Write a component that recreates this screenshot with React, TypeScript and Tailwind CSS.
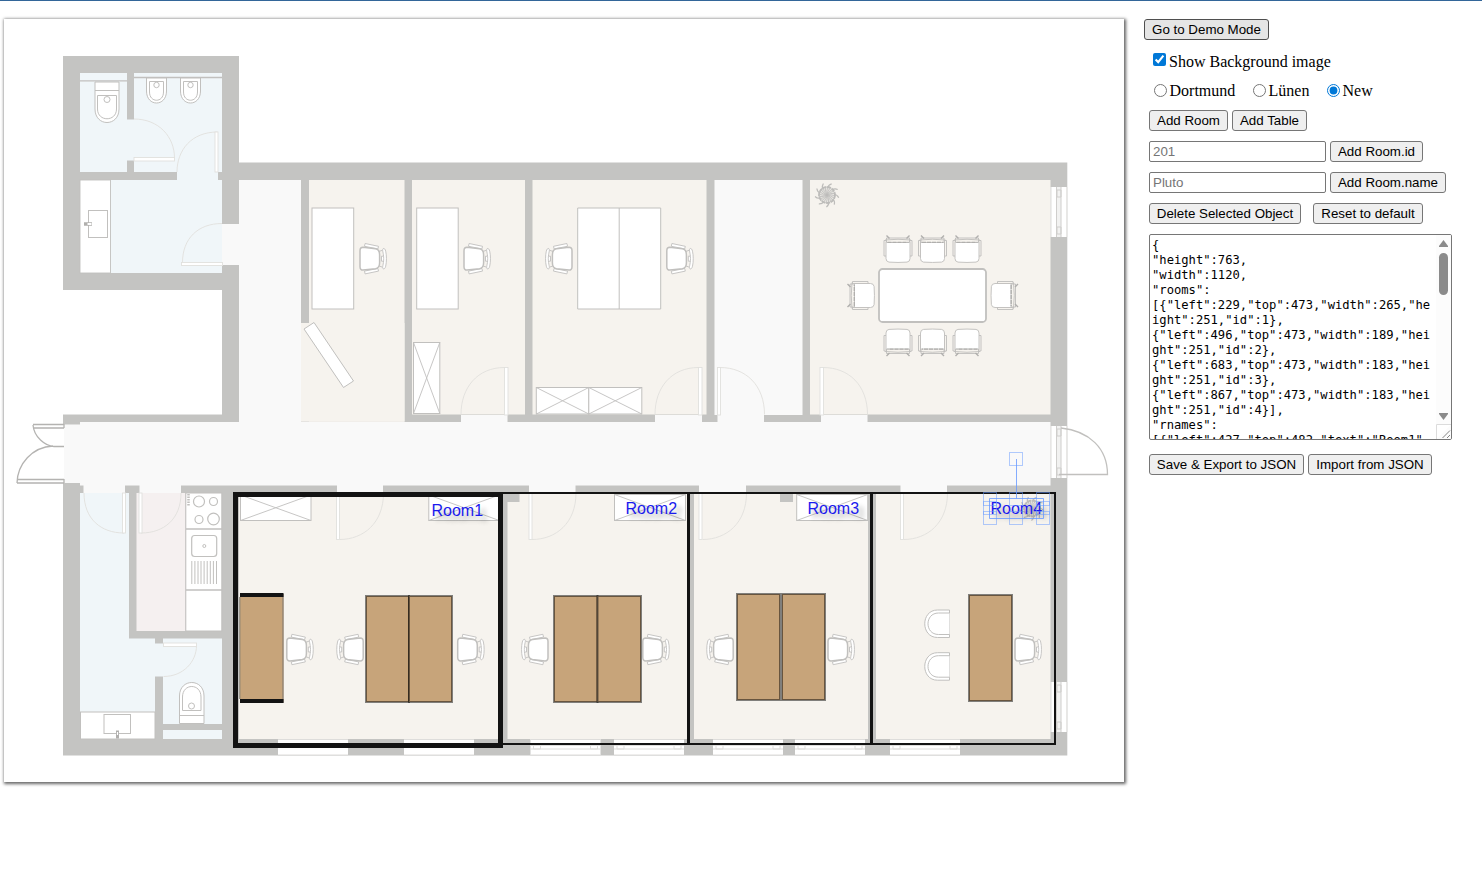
import React from "react";

type Box = [number, number, number, number];

const WALL = "#c4c4c2";
const LINE = "#c1c0be";
const BLUE = "#f0f6f9";
const BEIGE = "#f6f3ee";
const HALL = "#f9f9f9";
const PINK = "#f5f0f0";

const floors: { fill: string; boxes: Box[] }[] = [
  { fill: "#ffffff", boxes: [[63, 290, 159, 124.5]] },
  {
    fill: BLUE,
    boxes: [
      [80, 73, 47, 99], [134, 73, 88, 99], [127, 119.5, 7, 41], [177, 172, 41, 8], [80, 180, 142, 93],
      [80, 493, 49, 246], [129, 638.5, 26, 100.5], [155, 643.5, 8, 33], [163, 638.5, 59, 85.5], [163, 730, 59, 9],
    ],
  },
  {
    fill: HALL,
    boxes: [
      [222, 224, 17, 41], [239, 180, 62, 243], [714.5, 180, 88, 235], [80, 422, 970.5, 63.5], [63.5, 424.5, 17, 58.5],
      [461, 415, 46.5, 8], [655, 415, 47, 8], [717.5, 415, 46.5, 8], [821, 415, 46.5, 8],
      [83.5, 485, 41.5, 8], [139.5, 485, 41.5, 8], [337, 485, 46, 8], [529, 485, 46.5, 8], [699, 485, 47, 8], [900.5, 485, 46.5, 8],
    ],
  },
  {
    fill: BEIGE,
    boxes: [
      [309, 180, 95.5, 241.7], [301, 323, 103.5, 98.7], [412, 180, 113, 234.5], [532.5, 180, 174, 234.5], [810, 180, 240.5, 234.5],
      [239, 493, 259, 246], [507.5, 493, 180, 246], [694, 493, 174, 246], [876, 493, 174.5, 246],
    ],
  },
  { fill: PINK, boxes: [[136.5, 493, 49, 138]] },
];

const windowsSouth = [278, 404, 530.5, 614, 713, 795, 890];
const windowsEast: [number, number][] = [[187, 50], [426, 52], [682, 50]];

function Rects({ boxes, fill }: { boxes: Box[]; fill: string }) {
  return (
    <g fill={fill}>
      {boxes.map(([x, y, w, h]) => (
        <rect key={`${x}-${y}`} x={x} y={y} width={w} height={h} />
      ))}
    </g>
  );
}

function OfficeChair({ x, y, flip = false }: { x: number; y: number; flip?: boolean }) {
  return (
    <g transform={`translate(${x} ${y}) scale(${flip ? -1 : 1} 1)`} fill="#fff" stroke={LINE} strokeWidth="0.9">
      <path d="M5.6-15.2 19-12.4 18.4-9.8 5-12.4ZM5.6 15.2 19 12.4 18.4 9.8 5 12.4Z" />
      <path d="M22-2.5h3v5h-3zM19-7l4-1.5M19 7l4 1.5" />
      <path d="M23.6-10c1-.9 2.2.6 2.6 2.5 1 4 1 11 0 15-.4 1.9-1.6 3.4-2.6 2.5-1.3-1.4.6-4 .6-10s-1.9-8.6-.6-10Z" />
      <path strokeWidth="1.5" d="M3.5-11.4 16-10c3 .5 4.1 2.6 4.1 6v8c0 3.4-1.1 5.500-4.100 6L3.500 11.400C1.500 11.400.5 10 .5 8V-8C.5-10 1.500-11.400 3.500-11.400Z" />
    </g>
  );
}

function MeetingChair({ x, y, turn }: { x: number; y: number; turn: number }) {
  return (
    <g transform={`translate(${x} ${y}) rotate(${turn})`} fill="none" stroke="#bebdbb" strokeWidth="0.9">
      <path d="M-14-22h2.500v15.500H-14zM14-22h-2.500v15.500H14z" fill={BEIGE} />
      <path d="M-9-.4Q-12-.8-12-4V-21h24V-4q0 3.200-3 3.600Q0 .3-9-.4Z" fill="#fff" />
      <path d="M-11.500-24.500h23v4.500h-23z" fill={BEIGE} />
      <path d="M-13-22.500Q0-24 13-22.500" />
      <path d="M-10.500-20.200h21" stroke="#b0afad" strokeWidth="1.3" strokeDasharray="4 1" />
      <path d="M-11.500-27-8.500-24M11.500-27 8.500-24" stroke="#b0afad" strokeWidth="1.4" />
    </g>
  );
}

function VisitorChair({ y }: { y: number }) {
  return (
    <g fill="#fff" stroke={LINE}>
      <path d={`M949.500 ${y}v27.500h-12c-17 0-17-27.500 0-27.500Z`} />
      <path d={`M949.500 ${y + 3}h-11c-14 0-14 21.500 0 21.500h11`} />
    </g>
  );
}

function Plant({ x, y, r }: { x: number; y: number; r: number }) {
  const spikes = Array.from({ length: 9 }, (_, i) => i * 40 + 8);
  const rays = Array.from({ length: 20 }, (_, i) => i * 18);
  return (
    <g transform={`translate(${x} ${y}) scale(${r / 12})`} fill="none" stroke="#bdbcba" strokeWidth="0.8">
      <circle r="8" strokeWidth="1.800" strokeDasharray="4 .7" fill="#e6e4e0" />
      {rays.map((a) => (
        <path key={a} d="M0 0Q4-1 8 1" transform={`rotate(${a})`} strokeWidth="0.700" />
      ))}
      {spikes.map((a) => (
        <path key={a} d="M7-1.500Q10-2 12 1" transform={`rotate(${a})`} strokeWidth="1.200" />
      ))}
    </g>
  );
}

function Cabinet({ box: [x, y, w, h] }: { box: Box }) {
  return (
    <g fill="#fff" stroke={LINE}>
      <rect x={x} y={y} width={w} height={h} />
      <path d={`M${x} ${y}l${w} ${h}M${x + w} ${y}l${-w} ${h}`} strokeWidth="0.900" />
    </g>
  );
}

function Doors() {
  return (
    <g fill="none" stroke="#e1e0dd" strokeWidth="0.900">
      <path d="M134 119c25 0 40.500 18 40.500 39M217.500 132c-26 0-40.500 18-40.500 40M222 223.500c-24 0-39.500 15-39.500 39" />
      <path d="M504.500 367.500c-27 0-43.500 20-43.500 47M698.500 367.500c-27 0-43.500 20-43.500 47M720 367.500c26 0 44.500 18 44.500 47M823 367.500c26 0 44.500 18 44.500 47" />
      <path d="M84 493c0 26 17 40 40 40M181 493c0 26-17 40-40 40M163.500 676.500c20 0 33-15 33-31" />
      <path d="M383.500 493c0 30-20 46.500-44 46.500M576 493c0 30-20 46.500-44 46.500M746.500 493c0 30-20 46.500-44 46.500M947.500 493c0 30-20 46.500-44 46.500" />
      <g fill="#fff">
        <rect x="134" y="157.500" width="40.500" height="3.500" />
        <rect x="215" y="132" width="3" height="40" />
        <rect x="181.500" y="262.500" width="41" height="3" />
        <rect x="504.500" y="367.500" width="3.500" height="47.500" />
        <rect x="698.500" y="367.500" width="3.500" height="47.500" />
        <rect x="717.500" y="367.500" width="3" height="47.500" />
        <rect x="820" y="367.500" width="3.500" height="47.500" />
        <rect x="122.500" y="493" width="3" height="40" />
        <rect x="139" y="493" width="3" height="40" />
        <rect x="163.500" y="643" width="33" height="3.500" />
        <rect x="336.500" y="493" width="3" height="46.500" />
        <rect x="529" y="493" width="3" height="46.500" />
        <rect x="699" y="493" width="3" height="46.500" />
        <rect x="900.500" y="493" width="3" height="46.500" />
      </g>
    </g>
  );
}

function Sanitary() {
  return (
    <g fill="#fff" stroke={LINE}>
      <path d="M80 80.800h47M134 77.500h88" strokeWidth="1.300" />
      <path d="M95 82h24v27c0 18-24 18-24 0Z" />
      <path d="M95 90.500h24M97.500 95.500h19V109c0 13-19 13-19 0Z" />
      <circle cx="107" cy="99.500" r="3" />
      {[146.500, 180.500].map((x) => (
        <g key={x}>
          <path d={`M${x} 78h20v13c0 16-20 16-20 0Z`} />
          <path d={`M${x + 3} 81.500h14V92c0 11-14 11-14 0Z`} />
          <circle cx={x + 10} cy="85" r="2.700" />
        </g>
      ))}
      <rect x="80" y="180" width="30.500" height="93" strokeWidth="0.900" />
      <rect x="88.500" y="210.500" width="19" height="27" />
      <path d="M84 224h8" stroke="#b0afad" strokeWidth="3.500" />
      <path d="M87.500 224h4" strokeWidth="2" stroke="#fff" />
      <rect x="80.500" y="712" width="74.500" height="27" />
      <rect x="104" y="714.500" width="26.500" height="19" />
      <path d="M117.500 730.500v8" stroke="#b0afad" strokeWidth="3" />
      <path d="M117.500 732v3" strokeWidth="1.200" stroke="#fff" />
      <path d="M179.500 723.500V696c0-18 24.500-18 24.500 0v27.500Z" />
      <path d="M179.500 715.500H204M182.500 710.500V697c0-14 18.500-14 18.500 0v13.500Z" />
      <circle cx="191.500" cy="706" r="3" />
    </g>
  );
}

function Kitchen() {
  return (
    <g fill="#fff" stroke={LINE}>
      <rect x="185.800" y="493" width="36" height="138" />
      <path d="M186 529h36M186 590h36" strokeWidth="1.300" />
      <g strokeWidth="1.200">
        <circle cx="199" cy="501.500" r="5.500" />
        <circle cx="213.500" cy="501.500" r="4" />
        <circle cx="199" cy="519.500" r="4" />
        <circle cx="213.500" cy="519" r="5.800" />
        <path d="M188.500 494v12" strokeWidth="2.500" strokeDasharray="1.500 1" />
      </g>
      <rect x="191.700" y="535.500" width="25" height="21" rx="3" strokeWidth="1.200" />
      <circle cx="204.300" cy="546" r="1.500" />
      <path d="M191.800 561v23M194.900 561v23M198 561v23M201 561v23M204.100 561v23M207.200 561v23M210.300 561v23M213.400 561v23M216.500 561v23" />
    </g>
  );
}

function Windows() {
  return (
    <g fill="none" stroke="#dedddb">
      {windowsSouth.map((x, i) => (
        <g key={x}>
          <rect x={x} y="739" width="70" height="16" fill="#fff" stroke="none" />
          <path d={`M${x} 739.500h70M${x} 755h70`} />
          {i > 1 && <path d={`M${x} 745.500h70M${x} 749h70M${x + 3} 745v4h7v-4M${x + 60} 745v4h7v-4`} />}
        </g>
      ))}
      {windowsEast.map(([y, h]) => (
        <g key={y}>
          <rect x="1050.500" y={y} width="16.500" height={h} fill="#fff" stroke="none" />
          <rect x="1057" y={y} width="4" height={h} fill="#f2f2f1" stroke="none" />
          <path d={`M1051 ${y}v${h}M1066.800 ${y}v${h}`} />
          <path d={`M1056.500 ${y}v${h}M1061 ${y}v${h}M1057 ${y + 3}h4v7h-4zM1057 ${y + h - 10}h4v7h-4z`} stroke="#cfcecc" />
        </g>
      ))}
    </g>
  );
}

function FloorPlan() {
  return (
    <g>
      <path d="M63 56h176v106.500h828.300v593H63Z" fill={WALL} />
      {floors.map((f) => (
        <Rects key={f.fill} boxes={f.boxes} fill={f.fill} />
      ))}
      <Rects fill="#fff" boxes={[[63, 424.500, 1, 58.500]]} />
      <Rects fill={WALL} boxes={[[507, 493, 12.500, 9], [780, 493, 13, 9]]} />
      <Windows />
      <g fill="none" stroke="#b4b3b1" strokeWidth="1.300">
        <path d="M64 424.500H33M33.500 428H64M33 425c1 12 12 21 21 21.500h10M53 446C32 447 17.500 464 17 483M17 483h47M18 479.500h46M64 424v4M64 479v4" />
        <path d="M1059 474.500h48.500c0-26-18-43.500-46.500-46.500" stroke={LINE} />
      </g>
      <Sanitary />
      <Kitchen />
      <g fill="#fff" stroke={LINE}>
        <rect x="312" y="208" width="41.700" height="101" />
        <rect x="416.700" y="208" width="41.500" height="101" />
        <path d="M577.700 208h83v101h-83zM619.200 208v101" />
        <path d="M304 329 314 322.500 353.500 381 343.500 387.500Z" />
        <rect x="879" y="269" width="107" height="53" rx="3.500" strokeWidth="1.800" />
      </g>
      <Cabinet box={[413.500, 342.500, 26.300, 71]} />
      <Cabinet box={[536.300, 387.500, 52.500, 26.500]} />
      <Cabinet box={[588.800, 387.500, 53, 26.500]} />
      <Cabinet box={[240.500, 495, 70.500, 25.500]} />
      <Cabinet box={[428.800, 495, 70.500, 25.500]} />
      <Cabinet box={[614.500, 494.500, 71, 26]} />
      <Cabinet box={[796.700, 494.500, 71, 26]} />
      <Doors />
      <Plant x={827} y={195} r={12} />
      <Plant x={1032} y={508.500} r={12} />
      {[359.500, 463.500, 666.300].map((x) => (
        <OfficeChair key={x} x={x} y={258.700} />
      ))}
      <OfficeChair x={572.500} y={258.700} flip />
      {[286.300, 457.200, 642.300, 827.500, 1014.500].map((x) => (
        <OfficeChair key={x} x={x} y={649.500} />
      ))}
      {[363.700, 548.500, 733.700].map((x) => (
        <OfficeChair key={x} x={x} y={649.500} flip />
      ))}
      {[898, 932.500, 967].map((x) => (
        <g key={x}>
          <MeetingChair x={x} y={262.500} turn={0} />
          <MeetingChair x={x} y={329} turn={180} />
        </g>
      ))}
      <MeetingChair x={874.500} y={295.500} turn={-90} />
      <MeetingChair x={991} y={295.500} turn={90} />
      <VisitorChair y={610} />
      <VisitorChair y={652.700} />
    </g>
  );
}

const desks: Box[] = [
  [366, 596, 43, 106], [409, 596, 43, 106],
  [554, 596, 43.500, 106], [597.500, 596, 43.500, 106],
  [737, 594, 43, 106], [782, 594, 43, 106],
  [969, 595, 43, 106],
];

const labels: [string, number, number][] = [
  ["Room1", 431.500, 516], ["Room2", 625.500, 514], ["Room3", 807.500, 514], ["Room4", 990.500, 514],
];

const handles: [number, number][] = [
  [983.500, 492.500], [1009.500, 492.500], [1036.500, 492.500],
  [983.500, 501.500], [1036.500, 501.500],
  [983.500, 511.500], [1009.500, 511.500], [1036.500, 511.500],
  [1009.500, 452.500],
];

function Canvas() {
  return (
    <svg
      viewBox="4 19 1120 763"
      className="block h-[763px] w-[1120px] shrink-0 bg-white shadow-[1px_1px_3px_1px_#666]"
    >
      <FloorPlan />
      <g fill="none" stroke="#131313">
        <rect x="235.500" y="494.500" width="265" height="251" strokeWidth="5" />
        <path d="M503 493H1055V744H503M688.500 493v251M871.500 493v251" strokeWidth="2" />
        <path d="M688.500 492v253M871.500 492v253" strokeWidth="3" />
      </g>
      <rect x="240" y="594" width="43.500" height="108" fill="#c7a47a" />
      <path d="M283 594v109M239.800 597v102" stroke="#7b756c" />
      <path d="M240 595h43.500M240 701h43.500" stroke="#131313" strokeWidth="4" />
      <g fill="#c7a47a" stroke="#000" strokeOpacity="0.480" strokeWidth="2">
        {desks.map(([x, y, w, h]) => (
          <rect key={x} x={x} y={y} width={w} height={h} />
        ))}
      </g>
      <g className="font-['Liberation_Sans',sans-serif] text-[16px] [text-shadow:5px_5px_5px_rgba(0,0,0,0.3)]" fill="#1a1aee">
        {labels.map(([t, x, y]) => (
          <text key={t} x={x} y={y}>{t}</text>
        ))}
      </g>
      <g fill="none" stroke="#6699ff" strokeOpacity="0.500">
        {handles.map(([x, y]) => (
          <rect key={`${x}-${y}`} x={x} y={y} width="13" height="13" />
        ))}
        <path d="M989.500 498.500h54v20h-54zM1016.500 459v39.500" strokeOpacity="0.800" />
      </g>
    </svg>
  );
}

const json = [
  "{",
  '"height":763,',
  '"width":1120,',
  '"rooms":',
  '[{"left":229,"top":473,"width":265,"he',
  'ight":251,"id":1},',
  '{"left":496,"top":473,"width":189,"hei',
  'ght":251,"id":2},',
  '{"left":683,"top":473,"width":183,"hei',
  'ght":251,"id":3},',
  '{"left":867,"top":473,"width":183,"hei',
  'ght":251,"id":4}],',
  '"rnames":',
  '[{"left":427,"top":482,"text":"Room1"',
].join("\n");

function Btn({ children, className }: { children: React.ReactNode; className: string }) {
  return (
    <button
      className={`flex h-[21px] shrink-0 items-center justify-center whitespace-nowrap rounded-[3px] border font-['Liberation_Sans',sans-serif] text-[13.333px] leading-[15px] text-black ${className}`}
    >
      {children}
    </button>
  );
}

const plain = "border-[#767676] bg-[#efefef]";
const field =
  "h-[21px] w-[177px] rounded-[2px] border border-[#767676] bg-white px-[3px] font-['Liberation_Sans',sans-serif] text-[13.333px] leading-[15px] placeholder:text-[#757575]";

function Choice({ label, checked = false, className }: { label: string; checked?: boolean; className: string }) {
  return (
    <label className={`flex items-center ${className}`}>
      <input type="radio" name="site" defaultChecked={checked} className="-mt-[2px] mr-[2.5px] size-[13px] accent-[#0078d7]" />
      {label}
    </label>
  );
}

function Panel() {
  return (
    <div className="flex flex-col items-start pl-[20px] font-['Liberation_Serif',serif] text-[16px] leading-[18px] text-black">
      <Btn className="w-[125px] border-[#4f4f4f] bg-[#e5e5e5]">Go to Demo Mode</Btn>
      <div className="flex flex-col items-start pl-[5px]">
        <label className="mt-[13px] flex h-[18px] items-center gap-[3px] pl-[4px]">
          <input type="checkbox" defaultChecked className="-mt-[5px] size-[13px] accent-[#0078d7]" />
          Show Background image
        </label>
        <div className="mt-[11px] flex h-[18px] items-center pl-[5px]">
          <Choice label="Dortmund" className="w-[99px]" />
          <Choice label="Lünen" className="w-[74px]" />
          <Choice label="New" checked className="" />
        </div>
        <div className="mt-[10px] flex gap-1">
          <Btn className={`w-[79px] ${plain}`}>Add Room</Btn>
          <Btn className={`w-[75px] ${plain}`}>Add Table</Btn>
        </div>
        <div className="mt-[10px] flex gap-1">
          <input className={field} placeholder="201" />
          <Btn className={`w-[93px] ${plain}`}>Add Room.id</Btn>
        </div>
        <div className="mt-[10px] flex gap-1">
          <input className={field} placeholder="Pluto" />
          <Btn className={`w-[116px] ${plain}`}>Add Room.name</Btn>
        </div>
        <div className="mt-[10px] flex gap-3">
          <Btn className={`w-[152px] ${plain}`}>Delete Selected Object</Btn>
          <Btn className={`w-[110px] ${plain}`}>Reset to default</Btn>
        </div>
        <div className="mt-[10px] flex h-[206px] w-[303px] overflow-hidden rounded-[2px] border border-[#767676] bg-white">
          <div className="h-[204px] w-[286px] overflow-hidden whitespace-pre pl-[2px] pt-[3px] font-['DejaVu_Sans_Mono',monospace] text-[12.170px] leading-[15px]">
            {json}
          </div>
          <div className="flex w-[15px] flex-col items-center justify-between bg-[#fcfcfc]">
            <div className="flex flex-col items-center gap-[6px] pt-[5px]">
              <svg viewBox="0 0 9 7" className="h-[7px] w-[9px]"><path d="M4.500 0 9 6v1H0V6Z" fill="#8b8b8b" /></svg>
              <div className="h-[42px] w-[9px] rounded-full bg-[#8b8b8b]" />
            </div>
            <div className="flex flex-col items-center gap-[4px]">
              <svg viewBox="0 0 9 7" className="h-[7px] w-[9px]"><path d="M4.500 7 9 1V0H0v1Z" fill="#8b8b8b" /></svg>
              <svg viewBox="0 0 15 15" className="size-[15px]">
                <path d="M.5 15V.5H15" fill="#fff" stroke="#dcdcdc" />
                <path d="M6.500 14 14 6.500M11 14l3-3" stroke="#777" strokeWidth="0.900" />
              </svg>
            </div>
          </div>
        </div>
        <div className="mt-[14px] flex gap-1">
          <Btn className={`w-[155px] ${plain}`}>Save &amp; Export to JSON</Btn>
          <Btn className={`w-[124px] ${plain}`}>Import from JSON</Btn>
        </div>
      </div>
    </div>
  );
}

export default function App() {
  return (
    <div className="h-[874px] w-[1482px] overflow-hidden border-t border-[#336699] bg-white">
      <div className="flex items-start pl-1 pt-[18px]">
        <Canvas />
        <Panel />
      </div>
    </div>
  );
}
